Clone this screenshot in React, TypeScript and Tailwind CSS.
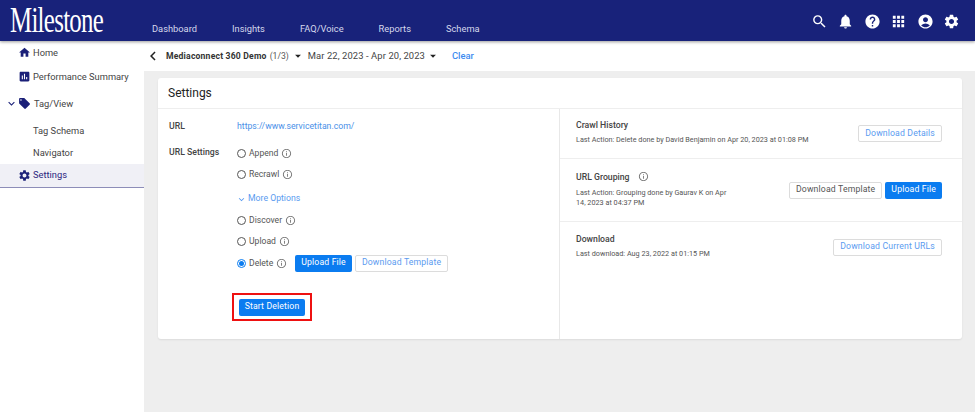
import { MdSearch, MdNotifications, MdHelp, MdApps, MdAccountCircle, MdSettings, MdHome, MdAssessment, MdLocalOffer, MdExpandMore, MdChevronLeft, MdArrowDropDown, MdInfoOutline } from "react-icons/md";

const navLinks = ["Dashboard", "Insights", "FAQ/Voice", "Reports", "Schema"];

function Info({ className = "" }: { className?: string }) {
  return <MdInfoOutline size={11} className={`text-[#777] ${className}`} />;
}

function Radio({ label, checked = false, className = "" }: { label: string; checked?: boolean; className?: string }) {
  return (
    <div className={`flex items-center h-[14px] ${className}`}>
      <span className={`w-[9px] h-[9px] rounded-full border flex items-center justify-center ${checked ? "border-[#0b7cf0]" : "border-[#555]"}`}>
        {checked && <span className="w-[5px] h-[5px] rounded-full bg-[#0b7cf0]" />}
      </span>
      <span className="ml-[3px] text-[8.6px] text-[#555]">{label}</span>
      <Info className="ml-[3px]" />
    </div>
  );
}

function Outline({ children, tone = "text-[#5b9bf0]", className = "" }: { children: string; tone?: string; className?: string }) {
  return (
    <button className={`h-[17px] px-[6px] rounded-[2px] border border-[#dcdcdc] bg-white text-[8.7px] tracking-[0.15px] whitespace-nowrap ${tone} ${className}`}>
      {children}
    </button>
  );
}

function Solid({ children, className = "" }: { children: string; className?: string }) {
  return (
    <button className={`h-[17px] px-[6px] rounded-[2px] bg-[#0b7cf0] text-white text-[8.7px] tracking-[0.15px] whitespace-nowrap ${className}`}>
      {children}
    </button>
  );
}

function SideItem({ icon, label, active = false }: { icon?: React.ReactNode; label: string; active?: boolean }) {
  return (
    <div className={`flex items-center pl-[18px] ${active ? "h-[24px] bg-[#f0f0f6] border-b border-[#8d8db8] text-[#2a2580]" : "text-[#444]"}`}>
      <span className="w-[15px] flex items-center text-[#1b2078]">{icon}</span>
      <span className="text-[9.3px]">{label}</span>
    </div>
  );
}

export default function App() {
  return (
    <div className="w-[975px] h-[412px] overflow-hidden flex flex-col bg-[#eeeeee] font-['Roboto',sans-serif]">
      <header className="h-[41px] shrink-0 bg-[#18227a] flex items-center pr-[15px] shadow-[0_1px_3px_rgba(0,0,0,0.4)] relative z-10">
        <div className="w-[152px] pl-[10px] h-[41px]">
          <div className="origin-left scale-x-[0.69] font-['Liberation_Serif',serif] text-white text-[36px] leading-[41px] tracking-[-1px] whitespace-nowrap">Milestone</div>
        </div>
        <nav className="flex gap-[35px] pt-[16px] text-[9.3px] text-[#d5d8ec]">
          {navLinks.map((n) => (
            <span key={n}>{n}</span>
          ))}
        </nav>
        <div className="ml-auto flex items-center text-white pt-[1px]">
          <MdSearch size={17} />
          <MdNotifications size={17} className="ml-[9.4px]" />
          <MdHelp size={17} className="ml-[9.4px]" />
          <MdApps size={17} className="ml-[9.4px]" />
          <MdAccountCircle size={17} className="ml-[9.4px]" />
          <MdSettings size={17} className="ml-[9.4px]" />
        </div>
      </header>
      <div className="flex flex-1 min-h-0">
        <aside className="w-[144px] shrink-0 bg-white flex flex-col pt-[5px]">
          <div className="flex flex-col gap-[10px]">
            <SideItem icon={<MdHome size={13} />} label="Home" />
            <SideItem icon={<MdAssessment size={13} />} label="Performance Summary" />
          </div>
          <div className="flex items-center pl-[5px] mt-[13px] text-[#444]">
            <MdExpandMore size={13} className="text-[#1b2078]" />
            <MdLocalOffer size={13} className="text-[#1b2078]" />
            <span className="ml-[3px] text-[9.3px]">Tag/View</span>
          </div>
          <div className="flex flex-col gap-[8px] mt-[13px]">
            <SideItem label="Tag Schema" />
            <SideItem label="Navigator" />
          </div>
          <div className="mt-[4px]">
            <SideItem icon={<MdSettings size={13} />} label="Settings" active />
          </div>
        </aside>
        <main className="flex-1 min-w-0 flex flex-col">
          <div className="h-[30px] shrink-0 bg-white flex items-center">
            <span className="w-[18px] flex justify-center text-[#222]"><MdChevronLeft size={18} /></span>
            <span className="ml-[4px] text-[8.6px] font-bold tracking-[0.2px] text-[#333]">Mediaconnect 360 Demo</span>
            <span className="ml-[3px] text-[8.6px] text-[#555]">(1/3)</span>
            <MdArrowDropDown size={14} className="ml-[2px] text-[#222]" />
            <span className="ml-[3px] text-[9.4px] tracking-[0.1px] text-[#444]">Mar 22, 2023 - Apr 20, 2023</span>
            <MdArrowDropDown size={14} className="ml-[1px] text-[#222]" />
            <span className="ml-[12px] text-[9.4px] font-medium text-[#3d8bf0]">Clear</span>
          </div>
          <section className="mt-[7px] ml-[14px] mr-[13px] h-[261px] bg-white rounded-[3px] shadow-[0_1px_2px_rgba(0,0,0,0.08)] flex flex-col">
            <div className="h-[31px] shrink-0 border-b border-[#eeeeee] flex items-center pl-[10px] text-[12px] text-[#222]">Settings</div>
            <div className="flex flex-1 min-h-0">
              <div className="w-[402px] shrink-0 border-r border-[#e8e8e8] pl-[11px] pt-[13px]">
                <div className="flex items-center h-[10px] text-[8.7px]">
                  <span className="w-[68px] font-medium text-[#444]">URL</span>
                  <span className="text-[#4a90e8]">https://www.servicetitan.com/</span>
                </div>
                <div className="flex mt-[15px]">
                  <span className="w-[68px] text-[8.7px] font-medium text-[#444] leading-[10px]">URL Settings</span>
                  <div className="flex flex-col -mt-[1px]">
                    <Radio label="Append" />
                    <Radio label="Recrawl" className="mt-[7px]" />
                    <div className="flex items-center mt-[13px] h-[10px] text-[8.7px] text-[#5b9bf0]">
                      <MdExpandMore size={11} className="-ml-[1px]" />
                      <span className="ml-[1px]">More Options</span>
                    </div>
                    <Radio label="Discover" className="mt-[9px]" />
                    <Radio label="Upload" className="mt-[7px]" />
                    <div className="flex items-center mt-[6px] h-[18px]">
                      <Radio label="Delete" checked />
                      <Solid className="ml-[8px]">Upload File</Solid>
                      <Outline className="ml-[3px]">Download Template</Outline>
                    </div>
                    <div className="mt-[21px] -ml-[5px] w-[80px] h-[28px] border-2 border-[#ee1111] flex items-center justify-center">
                      <Solid>Start Deletion</Solid>
                    </div>
                  </div>
                </div>
              </div>
              <div className="flex-1 min-w-0 flex flex-col">
                <div className="h-[50px] border-b border-[#eeeeee] flex items-center justify-between pl-[16px] pr-[20px]">
                  <div className="pb-[2px]">
                    <div className="text-[8.7px] font-medium text-[#444] leading-[10px]">Crawl History</div>
                    <div className="mt-[5px] text-[7.25px] text-[#555] leading-[10px]">Last Action: Delete done by David Benjamin on Apr 20, 2023 at 01:08 PM</div>
                  </div>
                  <Outline>Download Details</Outline>
                </div>
                <div className="h-[63px] border-b border-[#eeeeee] flex items-center justify-between pl-[16px] pr-[20px]">
                  <div className="w-[160px] pb-[1px]">
                    <div className="flex items-center text-[8.7px] font-medium text-[#444] leading-[10px]">URL Grouping<Info className="ml-[8px]" /></div>
                    <div className="mt-[6px] text-[7.25px] text-[#555] leading-[10px]">Last Action: Grouping done by Gaurav K on Apr 14, 2023 at 04:37 PM</div>
                  </div>
                  <div className="flex gap-[3px]">
                    <Outline tone="text-[#555]">Download Template</Outline>
                    <Solid>Upload File</Solid>
                  </div>
                </div>
                <div className="h-[50px] flex items-center justify-between pl-[16px] pr-[20px]">
                  <div className="pb-[2px]">
                    <div className="text-[8.7px] font-medium text-[#444] leading-[10px]">Download</div>
                    <div className="mt-[5px] text-[7.25px] text-[#555] leading-[10px]">Last download: Aug 23, 2022 at 01:15 PM</div>
                  </div>
                  <Outline>Download Current URLs</Outline>
                </div>
              </div>
            </div>
          </section>
        </main>
      </div>
    </div>
  );
}
